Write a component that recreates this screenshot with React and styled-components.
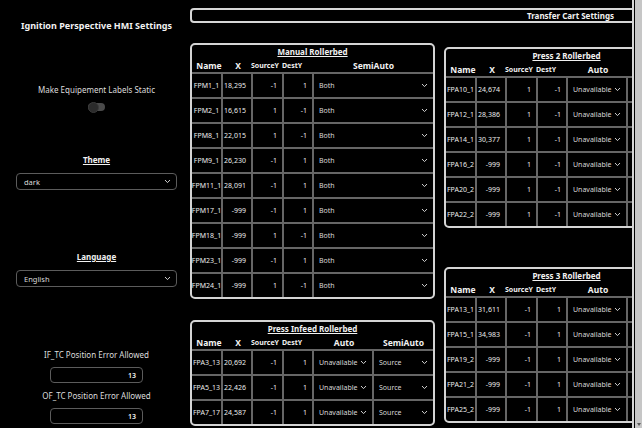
import React from 'react';
import styled, { createGlobalStyle } from 'styled-components';

const GlobalStyle = createGlobalStyle`
  html, body {
    margin: 0;
    padding: 0;
    background: #000;
  }
  body {
    font-family: "Noto Sans", "Open Sans", sans-serif;
    color: #e6e6e6;
  }
  * {
    box-sizing: border-box;
  }
`;

const Screen = styled.div`
  height: 100vh;
  display: flex;
  overflow: hidden;
  background: #000;
`;

/* page scrollbar, as seen in the capture */
const ScrollRail = styled.div`
  width: 7px;
  flex-shrink: 0;
  margin-left: 1px;
  background: #c6c6c6;
  display: flex;
  flex-direction: column;
  justify-content: flex-end;
  align-items: center;
  padding-bottom: 2px;

  &::after {
    content: '';
    width: 0;
    height: 0;
    border-left: 2px solid transparent;
    border-right: 2px solid transparent;
    border-top: 3px solid #5a5a5a;
  }
`;

/* ---------- left settings column ---------- */

const Sidebar = styled.aside`
  width: 190px;
  flex-shrink: 0;
  display: flex;
  flex-direction: column;
  align-items: center;
  padding: 19px 13px 0 16px;
`;

const SideTitle = styled.h1`
  margin: 0;
  font-size: 9px;
  line-height: 14px;
  font-weight: 700;
  color: #f2f2f2;
  white-space: nowrap;
`;

const SettingLabel = styled.div`
  margin-top: ${(p) => p.$gap}px;
  font-size: 8px;
  line-height: 12px;
  font-weight: ${(p) => (p.$heading ? 700 : 400)};
  text-decoration: ${(p) => (p.$heading ? 'underline' : 'none')};
  color: ${(p) => (p.$heading ? '#f2f2f2' : '#dcdcdc')};
  white-space: nowrap;
`;

const Toggle = styled.div`
  margin-top: 7px;
  width: 17px;
  height: 8px;
  border-radius: 4px;
  background: #4a4a4a;
  display: flex;
  align-items: center;

  &::before {
    content: '';
    width: 9px;
    height: 9px;
    border-radius: 50%;
    background: #2b2b2b;
    border: 1px solid #3a3a3a;
  }
`;

const SelectBox = styled.div`
  margin-top: 7px;
  width: 161px;
  height: 17px;
  border: 1px solid #5c5c5c;
  border-radius: 4px;
  display: flex;
  align-items: center;
  justify-content: space-between;
  padding: 0 5px 0 7px;
  font-size: 7.5px;
  color: #dcdcdc;
`;

const NumberInput = styled.div`
  margin-top: 6px;
  width: 93px;
  height: 16px;
  border: 1px solid #5c5c5c;
  border-radius: 4px;
  display: flex;
  align-items: center;
  justify-content: flex-end;
  padding-right: 6px;
  font-size: 7px;
  font-weight: 600;
  color: #f0f0f0;
`;

/* ---------- main area ---------- */

const Main = styled.main`
  flex: 1;
  min-width: 0;
  border-right: 2px solid #d6d6d6;
  overflow: hidden;
  display: flex;
  flex-direction: column;
  padding-top: 8px;
`;

const TopBar = styled.div`
  height: 15px;
  flex-shrink: 0;
  margin-right: -12px;
  border: 2px solid #d6d6d6;
  border-radius: 4px;
  display: flex;
  align-items: center;
  justify-content: flex-end;
  padding-right: 28px;
  font-size: 8px;
  font-weight: 700;
  color: #f2f2f2;
`;

const Columns = styled.div`
  display: flex;
  gap: 9px;
  margin-top: 20px;
`;

const Column = styled.div`
  width: 245px;
  flex-shrink: 0;
  display: flex;
  flex-direction: column;
  padding-top: ${(p) => p.$offset || 0}px;
`;

const PanelBox = styled.section`
  width: 245px;
  margin-top: ${(p) => p.$gap || 0}px;
  border: 2px solid #d4d4d4;
  border-radius: 5px;
  background: #000;
  overflow: hidden;
`;

const PanelTitle = styled.div`
  height: 13px;
  line-height: 13px;
  text-align: center;
  font-size: 8px;
  font-weight: 700;
  text-decoration: underline;
  color: #f2f2f2;
`;

const HeaderRow = styled.div`
  height: 14px;
  display: grid;
  grid-template-columns: ${(p) => p.$cols};
  align-items: center;
`;

const HeadCell = styled.div`
  text-align: ${(p) => (p.$small ? 'left' : 'center')};
  margin-left: ${(p) => (p.$small ? -2 : 0)}px;
  padding-left: ${(p) => (p.$name ? 3 : 0)}px;
  font-weight: 700;
  font-size: ${(p) => (p.$small ? 7 : 8.5)}px;
  color: #f2f2f2;
  white-space: nowrap;
`;

const Row = styled.div`
  height: 25px;
  display: grid;
  grid-template-columns: ${(p) => p.$cols};
  border-top: 2px solid #666;
`;

const Cell = styled.div`
  display: flex;
  align-items: center;
  justify-content: ${(p) => (p.$align === 'center' ? 'center' : 'flex-end')};
  padding: ${(p) => (p.$align === 'center' ? '0' : '0 5px 0 1px')};
  border-right: 2px solid #666;
  font-size: 7px;
  color: #ececec;
  white-space: nowrap;

  &:last-child {
    border-right: none;
  }
`;

const DropCell = styled(Cell)`
  justify-content: space-between;
  padding: 0 5px;
  color: #d8d8d8;
  overflow: hidden;
`;

const Chevron = () => (
  <svg width="7" height="5" viewBox="0 0 7 5" fill="none">
    <polyline points="1,1 3.5,3.6 6,1" stroke="#cfcfcf" strokeWidth="1" />
  </svg>
);

const COLS5 = '31px 30px 31px 30px 1fr';
const COLS6 = '31px 30px 31px 30px 60px 1fr';

const manual = [
  ['FPM1_1', '18,295', '-1', '1', 'Both'],
  ['FPM2_1', '16,615', '1', '-1', 'Both'],
  ['FPM8_1', '22,015', '1', '-1', 'Both'],
  ['FPM9_1', '26,230', '-1', '1', 'Both'],
  ['FPM11_1', '28,091', '-1', '1', 'Both'],
  ['FPM17_1', '-999', '-1', '1', 'Both'],
  ['FPM18_1', '-999', '1', '-1', 'Both'],
  ['FPM23_1', '-999', '-1', '1', 'Both'],
  ['FPM24_1', '-999', '1', '-1', 'Both'],
];

const infeed = [
  ['FPA3_13', '20,692', '-1', '1', 'Unavailable', 'Source'],
  ['FPA5_13', '22,426', '-1', '1', 'Unavailable', 'Source'],
  ['FPA7_17', '24,587', '-1', '1', 'Unavailable', 'Source'],
];

const press2 = [
  ['FPA10_1', '24,674', '1', '-1', 'Unavailable', 'Source'],
  ['FPA12_1', '28,386', '1', '-1', 'Unavailable', 'Source'],
  ['FPA14_1', '30,377', '1', '-1', 'Unavailable', 'Source'],
  ['FPA16_2', '-999', '1', '-1', 'Unavailable', 'Source'],
  ['FPA20_2', '-999', '1', '-1', 'Unavailable', 'Source'],
  ['FPA22_2', '-999', '1', '-1', 'Unavailable', 'Source'],
];

const press3 = [
  ['FPA13_1', '31,611', '-1', '1', 'Unavailable', 'Source'],
  ['FPA15_1', '34,983', '-1', '1', 'Unavailable', 'Source'],
  ['FPA19_2', '-999', '-1', '1', 'Unavailable', 'Source'],
  ['FPA21_2', '-999', '-1', '1', 'Unavailable', 'Source'],
  ['FPA25_2', '-999', '-1', '1', 'Unavailable', 'Source'],
];

const HEAD5 = ['Name', 'X', 'SourceY', 'DestY', 'SemiAuto'];
const HEAD6 = ['Name', 'X', 'SourceY', 'DestY', 'Auto', 'SemiAuto'];

const RollerbedPanel = ({ title, headers, cols, rows, gap }) => (
  <PanelBox $gap={gap}>
    <PanelTitle>{title}</PanelTitle>
    <HeaderRow $cols={cols}>
      {headers.map((h) => (
        <HeadCell
          key={h}
          $small={h === 'SourceY' || h === 'DestY'}
          $name={h === 'Name'}
        >
          {h}
        </HeadCell>
      ))}
    </HeaderRow>
    {rows.map(([name, x, src, dest, ...modes]) => (
      <Row key={name} $cols={cols}>
        <Cell $align="center">{name}</Cell>
        <Cell>{x}</Cell>
        <Cell>{src}</Cell>
        <Cell>{dest}</Cell>
        {modes.map((m, i) => (
          <DropCell key={i}>
            <span>{m}</span>
            <Chevron />
          </DropCell>
        ))}
      </Row>
    ))}
  </PanelBox>
);

const App = () => {
  return (
    <>
      <GlobalStyle />
      <Screen>
        <Sidebar>
          <SideTitle>Ignition Perspective HMI Settings</SideTitle>
          <SettingLabel $gap={51}>Make Equipement Labels Static</SettingLabel>
          <Toggle />
          <SettingLabel $gap={43} $heading>
            Theme
          </SettingLabel>
          <SelectBox>
            <span>dark</span>
            <Chevron />
          </SelectBox>
          <SettingLabel $gap={61} $heading>
            Language
          </SettingLabel>
          <SelectBox>
            <span>English</span>
            <Chevron />
          </SelectBox>
          <SettingLabel $gap={62}>IF_TC Position Error Allowed</SettingLabel>
          <NumberInput>13</NumberInput>
          <SettingLabel $gap={7}>OF_TC Position Error Allowed</SettingLabel>
          <NumberInput>13</NumberInput>
        </Sidebar>

        <Main>
          <TopBar>Transfer Cart Settings</TopBar>
          <Columns>
            <Column>
              <RollerbedPanel title="Manual Rollerbed" headers={HEAD5} cols={COLS5} rows={manual} />
              <RollerbedPanel
                title="Press Infeed Rollerbed"
                headers={HEAD6}
                cols={COLS6}
                rows={infeed}
                gap={21}
              />
            </Column>
            <Column $offset={4}>
              <RollerbedPanel title="Press 2 Rollerbed" headers={HEAD6} cols={COLS6} rows={press2} />
              <RollerbedPanel
                title="Press 3 Rollerbed"
                headers={HEAD6}
                cols={COLS6}
                rows={press3}
                gap={39}
              />
            </Column>
          </Columns>
        </Main>
        <ScrollRail />
      </Screen>
    </>
  );
};

export default App;
